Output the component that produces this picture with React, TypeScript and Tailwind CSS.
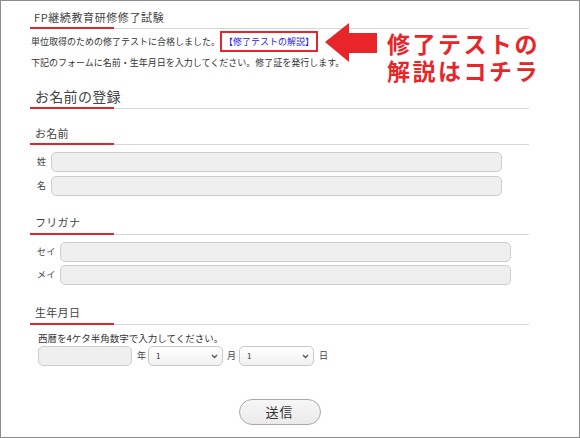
import React from "react";

const FONT = { fontFamily: '"Noto Sans CJK JP", "Noto Sans", sans-serif' };

function Rule() {
  return (
    <div className="flex items-end h-[2px]">
      <div className="w-[84px] h-[2px] bg-[#e0262b]" />
      <div className="flex-1 h-px bg-[#d6d6d6]" />
    </div>
  );
}

function Chevron() {
  return (
    <svg width="7" height="5" viewBox="0 0 7 5" className="absolute right-[5px] top-[8px] pointer-events-none">
      <path d="M1 1 L3.5 3.5 L6 1" stroke="#555" strokeWidth="1.3" fill="none" />
    </svg>
  );
}

function Select({ w }: { w: string }) {
  return (
    <div className={`relative ${w} h-[20px]`}>
      <select
        className="appearance-none w-full h-full rounded-[5px] border border-[#c8c8c8] bg-gradient-to-b from-white to-[#f1f1f1] pl-[7px] text-[8px] text-[#333] outline-none"
        style={FONT}
        defaultValue="1"
      >
        <option value="1">1</option>
      </select>
      <Chevron />
    </div>
  );
}

function TextInput({ w }: { w: string }) {
  return <div className={`${w} h-[20px] rounded-[5px] border border-[#cdcdcd] bg-[#efefef]`} />;
}

export default function App() {
  return (
    <div
      className="relative w-[580px] h-[438px] border border-[#8c8c8c] bg-white text-[#333] overflow-hidden"
      style={FONT}
    >
      <div className="ml-[29px] w-[499px]">
        {/* Title */}
        <div className="mt-[8px] pl-[4px] text-[11px] leading-[16px] tracking-[0.6px] text-[#444]">
          FP継続教育研修修了試験
        </div>
        <div className="mt-[2px]">
          <Rule />
        </div>

        {/* Intro */}
        <div className="mt-[2px] pl-[1px] text-[9px] leading-[21px] flex items-center">
          <span>単位取得のための修了テストに合格しました。</span>
          <span className="ml-[0px] inline-block border-2 border-[#e8262a] px-[2px] h-[21px] leading-[17px] text-[#2525e0]">
            【修了テストの解説】
          </span>
        </div>
        <div className="mt-[3px] pl-[1px] text-[9px] leading-[16px]">
          下記のフォームに名前・生年月日を入力してください。修了証を発行します。
        </div>

        {/* Section heading */}
        <div className="mt-[15px] pl-[5px] text-[14px] leading-[20px] tracking-[0.3px] text-[#444]">
          お名前の登録
        </div>
        <div className="mt-[1px]">
          <Rule />
        </div>

        {/* Name */}
        <div className="mt-[16px] pl-[5px] text-[11px] leading-[16px] tracking-[0.3px] text-[#444]">
          お名前
        </div>
        <div className="mt-[2px]">
          <Rule />
        </div>
        <div className="mt-[7px] flex items-center pl-[7px]">
          <span className="text-[9px] text-[#444] w-[9px]">姓</span>
          <div className="ml-[5px]">
            <TextInput w="w-[451px]" />
          </div>
        </div>
        <div className="mt-[4px] flex items-center pl-[7px]">
          <span className="text-[9px] text-[#444] w-[9px]">名</span>
          <div className="ml-[5px]">
            <TextInput w="w-[451px]" />
          </div>
        </div>

        {/* Furigana */}
        <div className="mt-[18px] pl-[5px] text-[11px] leading-[16px] tracking-[0.3px] text-[#444]">
          フリガナ
        </div>
        <div className="mt-[3px]">
          <Rule />
        </div>
        <div className="mt-[7px] flex items-center pl-[7px]">
          <span className="text-[9px] text-[#444] w-[19px] tracking-[0.5px]">セイ</span>
          <div className="ml-[4px]">
            <TextInput w="w-[451px]" />
          </div>
        </div>
        <div className="mt-[3px] flex items-center pl-[7px]">
          <span className="text-[9px] text-[#444] w-[19px] tracking-[0.5px]">メイ</span>
          <div className="ml-[4px]">
            <TextInput w="w-[451px]" />
          </div>
        </div>

        {/* Birthday */}
        <div className="mt-[19px] pl-[5px] text-[11px] leading-[16px] tracking-[0.3px] text-[#444]">
          生年月日
        </div>
        <div className="mt-[3px]">
          <Rule />
        </div>
        <div className="mt-[6px] pl-[8px] text-[9.5px] leading-[14px]">
          西暦を4ケタ半角数字で入力してください。
        </div>
        <div className="mt-[1px] pl-[8px] flex items-center text-[9px] text-[#444]">
          <TextInput w="w-[94px]" />
          <span className="ml-[5px]">年</span>
          <div className="ml-[2px]">
            <Select w="w-[75px]" />
          </div>
          <span className="ml-[4px]">月</span>
          <div className="ml-[3px]">
            <Select w="w-[75px]" />
          </div>
          <span className="ml-[5px]">日</span>
        </div>

        {/* Submit */}
        <div className="mt-[33px] flex justify-center">
          <button
            className="w-[82px] h-[26px] rounded-full border border-[#a9a9a9] bg-gradient-to-b from-[#f7f7f7] to-[#ebebeb] text-[13px] text-[#333] tracking-[1px]"
            style={FONT}
          >
            送信
          </button>
        </div>
      </div>

      {/* Annotation: arrow + callout text */}
      <svg
        className="absolute left-[322px] top-[20px]"
        width="56"
        height="44"
        viewBox="0 0 56 44"
      >
        <polygon points="2,21 26,2 26,12 54,12 54,32 26,32 26,41" fill="#e8262a" />
      </svg>
      <div className="absolute left-[386px] top-[29px] text-[23px] leading-[27px] font-bold tracking-[2.5px] text-[#e8262a]">
        <div>修了テストの</div>
        <div>解説はコチラ</div>
      </div>
    </div>
  );
}
